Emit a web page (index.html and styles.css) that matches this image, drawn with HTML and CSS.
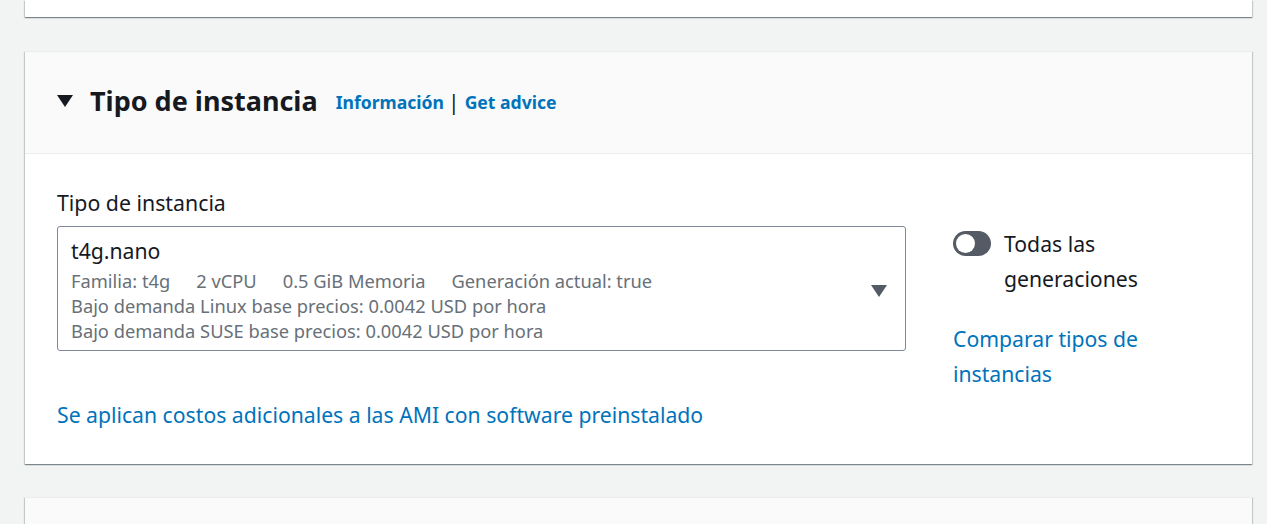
FILE: index.html
```html
<!DOCTYPE html>
<html lang="es">
<head>
<meta charset="utf-8">
<link rel="stylesheet" href="styles.css">
</head>
<body>
<div class="page">
  <div class="card card-top"></div>
  <section class="card">
    <header class="card-header">
      <svg class="caret" width="16" height="12" viewBox="0 0 16 12"><polygon points="0,0 16,0 8,12" fill="#16191f"/></svg>
      <h2 class="title">Tipo de instancia</h2>
      <span class="links"><a class="link">Información</a><span class="sep">|</span><a class="link">Get advice</a></span>
    </header>
    <div class="card-body">
      <div class="row">
        <div class="main-col">
          <div class="label">Tipo de instancia</div>
          <div class="select">
            <div class="select-text">
              <div class="sel-title">t4g.nano</div>
              <div class="sel-tags"><span>Familia: t4g</span><span>2 vCPU</span><span>0.5 GiB Memoria</span><span>Generación actual: true</span></div>
              <div class="sel-line">Bajo demanda Linux base precios: 0.0042 USD por hora</div>
              <div class="sel-line">Bajo demanda SUSE base precios: 0.0042 USD por hora</div>
            </div>
            <svg class="sel-caret" width="16" height="12" viewBox="0 0 16 12"><polygon points="0,0 16,0 8,12" fill="#545b64"/></svg>
          </div>
          <a class="link-normal costs">Se aplican costos adicionales a las AMI con software preinstalado</a>
        </div>
        <div class="side-col">
          <div class="toggle-row">
            <span class="toggle"><span class="knob"></span></span>
            <span class="toggle-label">Todas las generaciones</span>
          </div>
          <a class="link-normal compare">Comparar tipos de instancias</a>
        </div>
      </div>
    </div>
  </section>
  <div class="card card-next"></div>
</div>
</body>
</html>
```
FILE: styles.css
```css
* { box-sizing: border-box; }
html, body { margin: 0; padding: 0; }
body {
  background: #f2f3f3;
  font-family: "Noto Sans", "Open Sans", Arial, sans-serif;
  color: #16191f;
  width: 1267px;
  height: 524px;
  overflow: hidden;
}
.page {
  padding: 0 15px 0 25px;
  display: flex;
  flex-direction: column;
  gap: 33px;
}
.card {
  background: #fff;
  box-shadow: 0 1px 1px 0 rgba(0,28,36,0.3), 1px 1px 1px 0 rgba(0,28,36,0.15), -1px 1px 1px 0 rgba(0,28,36,0.15);
  border-top: 1px solid #eaeded;
}
.card-top { height: 17px; border-top: none; margin-bottom: 1px; }
.card-next { height: 40px; background: #fafafa; }
.card-header {
  background: #fafafa;
  border-bottom: 1px solid #eaeded;
  height: 102px;
  display: flex;
  align-items: center;
  padding: 0 32px 4px;
}
.caret { margin-right: 17px; }
.title {
  margin: 0;
  font-size: 27px;
  font-weight: 700;
  line-height: 34px;
  color: #16191f;
}
.links {
  margin-left: 18px;
  font-size: 17.6px;
  font-weight: 700;
  display: flex;
  align-items: center;
  padding-top: 3px;
}
.link { color: #0073bb; }
.sep { margin: 0 5px 0 4px; font-weight: 400; font-size: 21px; color: #16191f; }
.card-body { padding: 35px 32px 32px; }
.row { display: flex; gap: 47px; }
.main-col { width: 849px; flex: none; display: flex; flex-direction: column; }
.label { font-size: 21.3px; line-height: 28px; margin-bottom: 9px; }
.select {
  border: 1px solid #7d8998;
  border-radius: 3px;
  display: flex;
  align-items: center;
  padding: 9px 18px 7px 13px;
}
.select-text { flex: 1; }
.sel-title { font-size: 21.2px; line-height: 30px; margin-bottom: 2px; }
.sel-tags, .sel-line { font-size: 18.3px; line-height: 25px; color: #687078; }
.sel-tags span { margin-right: 26px; }
.sel-caret { margin-top: 3px; }
.link-normal { color: #0073bb; font-size: 21.2px; line-height: 35px; }
.costs { margin-top: 46px; }
.side-col { flex: 1; display: flex; flex-direction: column; }
.toggle-row { display: flex; align-items: flex-start; margin-top: 37px; }
.toggle {
  width: 38px; height: 25px;
  background: #545b64;
  border-radius: 13px;
  position: relative;
  flex: none;
  margin-top: 5px;
  margin-right: 13px;
}
.knob {
  position: absolute;
  left: 3px; top: 3px;
  width: 19px; height: 19px;
  border-radius: 50%;
  background: #fff;
}
.toggle-label { font-size: 21.2px; line-height: 35px; width: 160px; }
.compare { margin-top: 25px; width: 210px; }
```
